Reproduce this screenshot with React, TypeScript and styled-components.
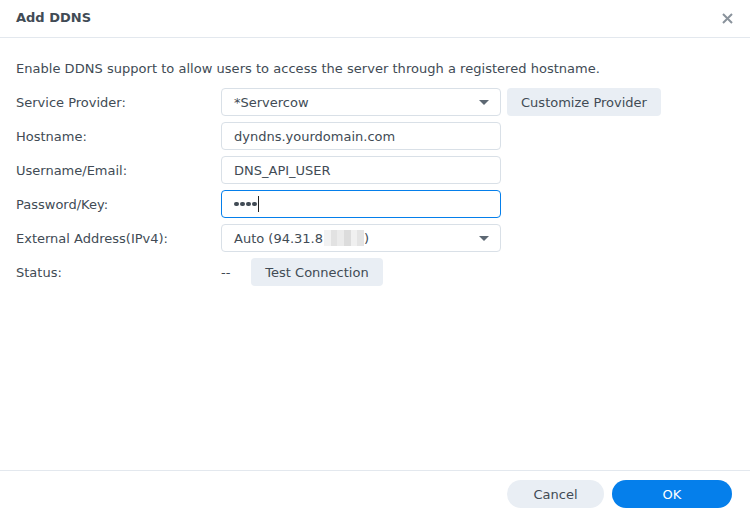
import React from "react";
import styled, { createGlobalStyle } from "styled-components";

const Global = createGlobalStyle`
  html, body { margin: 0; padding: 0; background: #fff; }
  body { font-family: "DejaVu Sans", Verdana, sans-serif; color: #414b55; }
  * { box-sizing: border-box; }
`;

const Dialog = styled.div`
  width: 750px;
  height: 517px;
  display: flex;
  flex-direction: column;
  background: #fff;
`;

const Header = styled.div`
  height: 38px;
  flex: none;
  display: flex;
  align-items: center;
  justify-content: space-between;
  padding: 0 16px 0 16px;
  border-bottom: 1px solid #e3e8ee;
`;

const Title = styled.div`
  font-size: 13px;
  font-weight: bold;
  color: #414b55;
  padding-bottom: 2px;
`;

const Close = styled.button`
  border: none;
  background: none;
  padding: 0;
  width: 14px;
  height: 14px;
  display: flex;
  align-items: center;
  justify-content: center;
  cursor: pointer;
`;

const Body = styled.div`
  flex: 1;
  padding: 22px 16px 0 16px;
`;

const Desc = styled.div`
  font-size: 13px;
  line-height: 18px;
  letter-spacing: 0.03px;
  margin-bottom: 10px;
`;

const Form = styled.div`
  display: flex;
  flex-direction: column;
  gap: 6px;
`;

const Row = styled.div`
  display: flex;
  align-items: center;
  height: 28px;
`;

const Label = styled.div`
  width: 205px;
  font-size: 13px;
`;

const Field = styled.div<{ $focus?: boolean }>`
  width: 280px;
  height: 28px;
  border: 1px solid ${(p) => (p.$focus ? "#057feb" : "#d9e0e7")};
  border-radius: 4px;
  display: flex;
  align-items: center;
  padding: 0 12px;
  font-size: 13px;
  color: #414b55;
`;

const FieldText = styled.span`
  flex: 1;
  display: flex;
  align-items: center;
  white-space: nowrap;
`;

const Caret = styled.span`
  width: 0;
  height: 0;
  border-left: 5px solid transparent;
  border-right: 5px solid transparent;
  border-top: 5px solid #5d6873;
  margin-right: -1px;
`;

const GrayButton = styled.button<{ $w: number }>`
  height: 28px;
  width: ${(p) => p.$w}px;
  border: none;
  border-radius: 4px;
  background: #e9eef4;
  color: #414b55;
  font-family: inherit;
  font-size: 13px;
  padding: 0;
`;

const Dots = styled.span`
  display: inline-flex;
  gap: 1.5px;
  align-items: center;
`;

const Dot = styled.span`
  width: 4.5px;
  height: 4.5px;
  border-radius: 50%;
  background: #414b55;
`;

const TextCaret = styled.span`
  display: inline-block;
  width: 1px;
  height: 16px;
  background: #222;
  margin-left: 1px;
`;

const Blur = styled.span`
  display: inline-flex;
  height: 16px;
  width: 40px;
  margin-left: 1px;
`;

const BlurCell = styled.span<{ $c: string }>`
  flex: 1;
  background: ${(p) => p.$c};
`;

const Status = styled.span`
  font-size: 13px;
  width: 30px;
`;

const Footer = styled.div`
  height: 47px;
  flex: none;
  border-top: 1px solid #e3e8ee;
  display: flex;
  align-items: flex-start;
  justify-content: flex-end;
  gap: 8px;
  padding: 9px 18px 0 0;
`;

const Pill = styled.button<{ $primary?: boolean; $w: number }>`
  height: 28px;
  width: ${(p) => p.$w}px;
  border: none;
  border-radius: 14px;
  background: ${(p) => (p.$primary ? "#057feb" : "#e9eef4")};
  color: ${(p) => (p.$primary ? "#fff" : "#414b55")};
  font-family: inherit;
  font-size: 13px;
  padding: 0;
`;

const blur = ["#f2f2f2", "#e2e2e2", "#ebebeb", "#dcdcdc", "#f0f0f0", "#e4e4e4"];

export default function App() {
  return (
    <>
      <Global />
      <Dialog>
        <Header>
          <Title>Add DDNS</Title>
          <Close aria-label="close">
            <svg width="11" height="11" viewBox="0 0 11 11">
              <path d="M1 1 L10 10 M10 1 L1 10" stroke="#8a939c" strokeWidth="2" />
            </svg>
          </Close>
        </Header>
        <Body>
          <Desc>Enable DDNS support to allow users to access the server through a registered hostname.</Desc>
          <Form>
            <Row>
              <Label>Service Provider:</Label>
              <Field>
                <FieldText>*Servercow</FieldText>
                <Caret />
              </Field>
              <GrayButton $w={154} style={{ marginLeft: 6 }}>Customize Provider</GrayButton>
            </Row>
            <Row>
              <Label>Hostname:</Label>
              <Field>
                <FieldText>dyndns.yourdomain.com</FieldText>
              </Field>
            </Row>
            <Row>
              <Label>Username/Email:</Label>
              <Field>
                <FieldText>DNS_API_USER</FieldText>
              </Field>
            </Row>
            <Row>
              <Label>Password/Key:</Label>
              <Field $focus>
                <FieldText>
                  <Dots>
                    <Dot />
                    <Dot />
                    <Dot />
                    <Dot />
                  </Dots>
                  <TextCaret />
                </FieldText>
              </Field>
            </Row>
            <Row>
              <Label>External Address(IPv4):</Label>
              <Field>
                <FieldText>
                  Auto (94.31.8
                  <Blur>
                    {blur.map((c, i) => (
                      <BlurCell key={i} $c={c} />
                    ))}
                  </Blur>
                  )
                </FieldText>
                <Caret />
              </Field>
            </Row>
            <Row>
              <Label>Status:</Label>
              <Status>--</Status>
              <GrayButton $w={132}>Test Connection</GrayButton>
            </Row>
          </Form>
        </Body>
        <Footer>
          <Pill $w={97}>Cancel</Pill>
          <Pill $w={120} $primary>OK</Pill>
        </Footer>
      </Dialog>
    </>
  );
}
